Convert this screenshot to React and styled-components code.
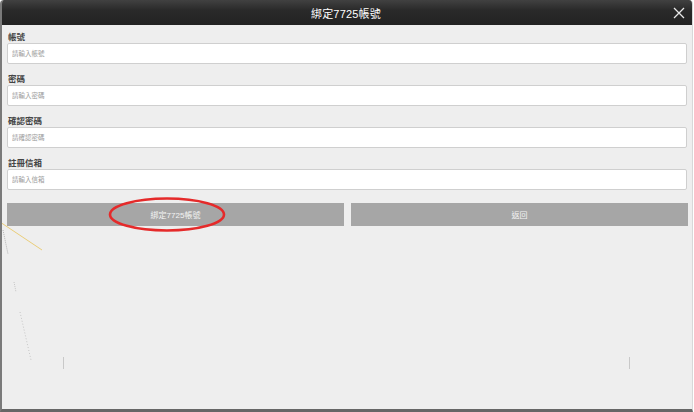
import React from "react";
import styled, { createGlobalStyle } from "styled-components";

const Global = createGlobalStyle`
  html, body { margin: 0; padding: 0; background: #ffffff; }
  body { font-family: "Liberation Sans", "Noto Sans CJK TC", sans-serif; }
  * { box-sizing: border-box; }
`;

const Dialog = styled.div`
  position: relative;
  width: 693px;
  height: 412px;
  display: flex;
  flex-direction: column;
  background: #eeeeee;
  border-left: 2px solid #7a7a7a;
  border-right: 1px solid #d8d8d8;
  border-bottom: 3px solid #666666;
  border-radius: 4px 4px 0 0;
  overflow: hidden;
`;

const Header = styled.div`
  position: relative;
  height: 25px;
  flex: none;
  margin-left: -2px;
  display: flex;
  align-items: center;
  justify-content: center;
  background: linear-gradient(#414141, #2a2a2a 40%, #222222);
  color: #ffffff;
  font-size: 11px;
  font-family: "Liberation Sans", "Noto Sans CJK TC", sans-serif;
  letter-spacing: 0.2px;
`;

const Close = styled.button`
  position: absolute;
  right: 7px;
  top: 7px;
  width: 12px;
  height: 12px;
  padding: 0;
  border: 0;
  background: transparent;
  display: flex;
`;

const Body = styled.div`
  flex: 1;
  display: flex;
  flex-direction: column;
  padding: 4px 5px 0 5px;
`;

const Field = styled.div`
  display: flex;
  flex-direction: column;
  margin-bottom: 7px;
`;

const Label = styled.div`
  height: 14px;
  display: flex;
  align-items: center;
  font-size: 8.5px;
  font-weight: bold;
  color: #444444;
  padding-left: 1px;
`;

const Input = styled.input`
  height: 21px;
  width: 680px;
  border: 1px solid #cfcfcf;
  border-radius: 2px;
  background: #ffffff;
  padding: 0 0 0 4px;
  font-family: "Liberation Sans", "Noto Sans CJK TC", sans-serif;
  font-size: 6.5px;
  outline: none;
  &::placeholder { color: #9a9a9a; }
`;

const Buttons = styled.div`
  display: grid;
  grid-template-columns: 337px 337px;
  column-gap: 7px;
  margin-top: 6px;
`;

const Btn = styled.button`
  position: relative;
  height: 23px;
  border: 0;
  border-radius: 0;
  background: #a6a6a6;
  color: #f4f4f4;
  font-family: "Liberation Sans", "Noto Sans CJK TC", sans-serif;
  font-size: 8px;
  padding: 0;
`;

const Mark = styled.svg`
  position: absolute;
  left: 0;
  top: 0;
  pointer-events: none;
  overflow: visible;
`;

const fields = [
  ["帳號", "請輸入帳號"],
  ["密碼", "請輸入密碼"],
  ["確認密碼", "請確認密碼"],
  ["註冊信箱", "請輸入信箱"],
];

export default function App() {
  return (
    <>
      <Global />
      <Dialog>
        <Header>
          綁定7725帳號
          <Close aria-label="close">
            <svg width="12" height="12" viewBox="0 0 12 12">
              <path d="M1 1 L11 11 M11 1 L1 11" stroke="#e8e8e8" strokeWidth="1.3" fill="none" />
            </svg>
          </Close>
        </Header>
        <Body>
          {fields.map(([l, p]) => (
            <Field key={l}>
              <Label>{l}</Label>
              <Input placeholder={p} />
            </Field>
          ))}
          <Buttons>
            <Btn>綁定7725帳號</Btn>
            <Btn>返回</Btn>
          </Buttons>
        </Body>
        <Mark width="693" height="412">
          <ellipse cx="165" cy="214.5" rx="57" ry="16" fill="none" stroke="#e52a2a" strokeWidth="2.6" />
          <line x1="-2" y1="222" x2="40" y2="250" stroke="#e8c45a" strokeWidth="0.8" />
          <line x1="1" y1="230" x2="6" y2="254" stroke="#999" strokeWidth="0.7" strokeDasharray="1 1" />
          <line x1="12" y1="282" x2="14" y2="292" stroke="#aaa" strokeWidth="0.6" strokeDasharray="1 1" />
          <line x1="18" y1="312" x2="29" y2="360" stroke="#aaa" strokeWidth="0.6" strokeDasharray="1 2" />
          <line x1="61.5" y1="357" x2="61.5" y2="369" stroke="#c8c8c8" strokeWidth="1" />
          <line x1="627.5" y1="357" x2="627.5" y2="369" stroke="#c8c8c8" strokeWidth="1" />
        </Mark>
      </Dialog>
    </>
  );
}
